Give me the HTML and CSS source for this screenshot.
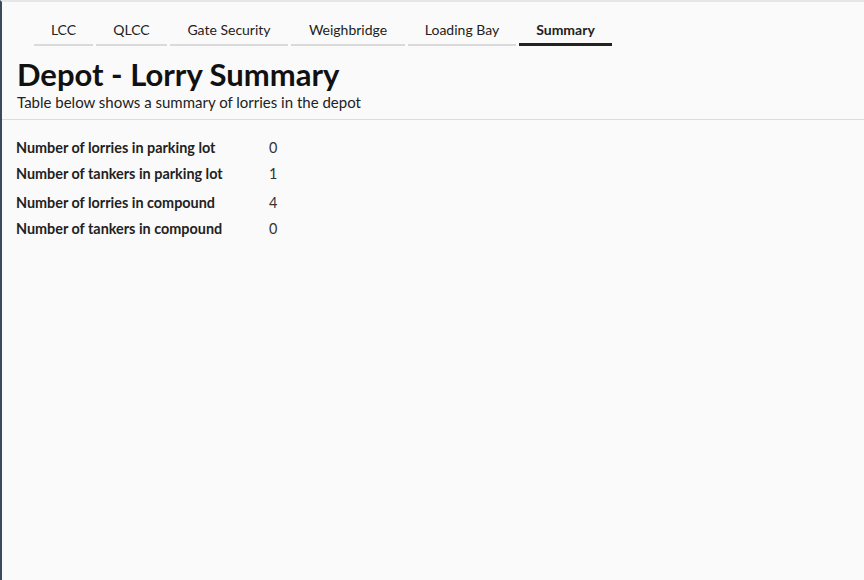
FILE: index.html
```html
<!DOCTYPE html>
<html lang="en">
<head>
    <meta charset="UTF-8">
    <title>Depot - Lorry Summary</title>
    <link rel="stylesheet" href="styles.css">
</head>
<body>
    <div class="page">
        <ul class="tabs">
            <li class="tab">LCC</li>
            <li class="tab">QLCC</li>
            <li class="tab">Gate Security</li>
            <li class="tab">Weighbridge</li>
            <li class="tab">Loading Bay</li>
            <li class="tab active">Summary</li>
        </ul>
        <div class="header">
            <h1>Depot - Lorry Summary</h1>
            <p>Table below shows a summary of lorries in the depot</p>
        </div>
        <table class="summary">
            <tr class="r1"><th>Number of lorries in parking lot</th><td>0</td></tr>
            <tr class="r2"><th>Number of tankers in parking lot</th><td>1</td></tr>
            <tr class="r3"><th>Number of lorries in compound</th><td>4</td></tr>
            <tr class="r4"><th>Number of tankers in compound</th><td>0</td></tr>
        </table>
    </div>
</body>
</html>
```

FILE: styles.css
```css
html, body {
    height: 100%;
}
body {
    margin: 0;
    background-color: #fafafa;
    font-family: Lato, "Open Sans", sans-serif;
    color: #222;
    border-left: 2px solid #3b4a5a;
    border-top: 2px solid #e6e6e6;
    box-sizing: border-box;
}
.page {
    padding-top: 14px;
}
.tabs {
    list-style: none;
    display: flex;
    gap: 3px;
    margin: 0 0 0 32px;
    padding: 0;
}
.tab {
    padding: 5px 16px 5px;
    font-size: 14px;
    line-height: 18px;
    color: #222;
    text-align: center;
    border-bottom: 2px solid #dadada;
}
.tab:nth-child(1) { width: 27px; }
.tab:nth-child(2) { width: 39px; }
.tab:nth-child(3) { width: 86px; }
.tab:nth-child(4) { width: 82px; }
.tab:nth-child(5) { width: 76px; }
.tab:nth-child(6) { width: 61px; }
.tab.active {
    font-weight: bold;
    border-bottom: 3px solid #222;
    padding-bottom: 4px;
}
.header {
    padding: 0 0 7px 15px;
    border-bottom: 1px solid #dcdcdc;
}
h1 {
    margin: 10px 0 0;
    font-size: 31px;
    line-height: 36px;
    color: #111;
}
p {
    margin: 1px 0 0;
    font-size: 15px;
    line-height: 19px;
}
.summary {
    margin: 14px 0 0 14px;
    border-collapse: collapse;
    font-size: 14.4px;
}
.summary th {
    text-align: left;
    font-weight: bold;
    padding: 0;
    width: 253px;
    color: #222;
}
.summary td {
    padding: 0;
    color: #333;
}
.summary tr { height: 26px; }
.summary tr.r3 { height: 29px; }
.summary tr.r3 th,
.summary tr.r3 td {
    padding-top: 3px;
}
```
